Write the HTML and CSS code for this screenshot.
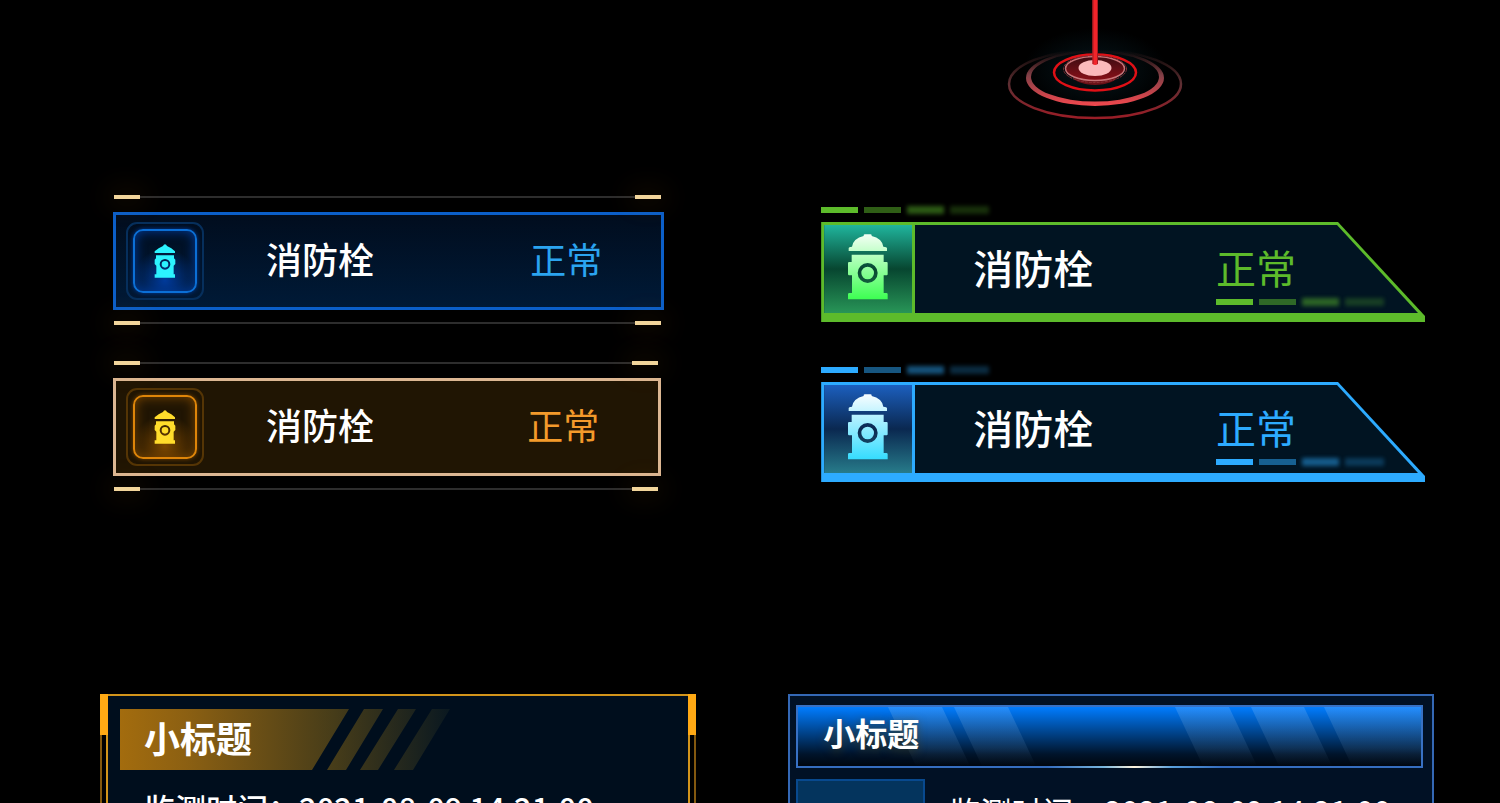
FILE: index.html
```html
<!DOCTYPE html>
<html lang="zh-CN">
<head>
<meta charset="utf-8">
<title>消防栓</title>
<link rel="stylesheet" href="styles.css">
</head>
<body>
<svg class="defs" width="0" height="0" aria-hidden="true">
  <symbol id="hydrant" viewBox="0 0 120 196">
    <path fill-rule="evenodd" d="M2 50V42Q2 38 12 37Q16 12 47 5V3Q47 0 51 0H67Q71 0 71 3V5Q102 12 106 37Q117 38 117 42V50ZM11 61H107V83H116Q119 83 119 87V119Q119 123 116 123H107V176H115Q119 176 119 180V195H0V180Q0 176 4 176H12V123H3Q0 123 0 119V87Q0 83 3 83H11ZM59 86A30 30 0 1 0 59 146A30 30 0 1 0 59 86ZM59 97A19 19 0 1 1 59 135A19 19 0 1 1 59 97Z"/>
  </symbol>
  <symbol id="hydrant-small" viewBox="0 0 64 102">
    <path fill-rule="evenodd" d="M1 27V22L13 13L26 6Q28 1 32 1Q36 1 38 6L51 13L62 22V27ZM5 34H59V43L63 47V60L58 65V91H62V101H1V91H6V65L1 60V47L5 43ZM32 45A16 16 0 1 0 32 77A16 16 0 1 0 32 45ZM32 51A10 10 0 1 1 32 71A10 10 0 1 1 32 51Z"/>
  </symbol>
</svg>
<main class="board">
  <svg class="beacon" width="200" height="140" viewBox="0 0 200 140" fill="none" aria-hidden="true">
    <defs>
      <linearGradient id="ring-outer" x1="0" y1="0" x2="0" y2="1">
        <stop offset="0" stop-color="#633" stop-opacity="0"/>
        <stop offset=".5" stop-color="#5e2f33"/>
        <stop offset="1" stop-color="#9a1e27"/>
      </linearGradient>
      <linearGradient id="ring-mid" x1="0" y1="0" x2="0" y2="1">
        <stop offset="0" stop-color="#733" stop-opacity="0"/>
        <stop offset=".45" stop-color="#824047"/>
        <stop offset="1" stop-color="#f2484e"/>
      </linearGradient>
      <radialGradient id="haze">
        <stop offset="0" stop-color="#0b2c38" stop-opacity=".5"/>
        <stop offset="1" stop-color="#0b2c38" stop-opacity="0"/>
      </radialGradient>
      <linearGradient id="core-glow" x1="0" y1="0" x2="0" y2="1">
        <stop offset="0" stop-color="#3d0c12"/>
        <stop offset="1" stop-color="#8a1018"/>
      </linearGradient>
    </defs>
    <ellipse cx="100" cy="70" rx="72" ry="42" fill="url(#haze)"/>
    <ellipse cx="100" cy="84" rx="86" ry="34" stroke="url(#ring-outer)" stroke-width="2.5"/>
    <path fill="url(#ring-mid)" fill-rule="evenodd" d="M31 78A69 28 0 1 0 169 78A69 28 0 1 0 31 78ZM36 77A64 24.5 0 1 1 164 77A64 24.5 0 1 1 36 77Z"/>
    <ellipse cx="100" cy="72.500" rx="41" ry="18" stroke="#e01016" stroke-width="2.500"/>
    <ellipse cx="100" cy="76" rx="22" ry="9" fill="#b3121a" opacity=".6"/>
    <ellipse cx="100" cy="68.500" rx="29.500" ry="12" fill="url(#core-glow)" stroke="#c87377" stroke-width="1.500"/>
    <ellipse cx="100" cy="69" rx="31.500" ry="13.500" stroke="#8b3036" stroke-width="1" stroke-dasharray="3 1"/>
    <ellipse cx="100" cy="68" rx="16.500" ry="8" fill="#fbb9bb"/>
    <path d="M97.500 0H103V64Q100 66 97.500 64Z" fill="#f2242a"/>
    <path d="M97.500 0H98.500V64H97.500ZM102 0H103V64H102Z" fill="#a81a20"/>
  </svg>

  <section class="framed-tags">
    <article class="framed framed-blue">
      <div class="rail"><i></i><i></i></div>
      <div class="framed-box">
        <div class="badge"><div class="badge-in"><svg width="22" height="34"><use href="#hydrant-small"/></svg></div></div>
        <span class="framed-name">消防栓</span>
        <span class="framed-state">正常</span>
      </div>
      <div class="rail rail-end"><i></i><i></i></div>
    </article>
    <article class="framed framed-gold">
      <div class="rail"><i></i><i></i></div>
      <div class="framed-box">
        <div class="badge"><div class="badge-in"><svg width="22" height="34"><use href="#hydrant-small"/></svg></div></div>
        <span class="framed-name">消防栓</span>
        <span class="framed-state">正常</span>
      </div>
      <div class="rail rail-end"><i></i><i></i></div>
    </article>
  </section>

  <section class="cut-tags">
    <article class="cut cut-green">
      <div class="dashes"><i></i><i></i><i></i><i></i></div>
      <div class="cut-edge">
        <div class="cut-face">
          <div class="cut-icon">
            <svg width="40" height="66"><defs><linearGradient id="fill-green" x1="0" y1="0" x2="0" y2="1"><stop offset="0" stop-color="#f4fff5"/><stop offset="1" stop-color="#3dff52"/></linearGradient></defs><use href="#hydrant" fill="url(#fill-green)"/></svg>
          </div>
          <span class="cut-name">消防栓</span>
          <div class="cut-state"><span>正常</span><div class="dashes"><i></i><i></i><i></i><i></i></div></div>
        </div>
      </div>
    </article>
    <article class="cut cut-blue">
      <div class="dashes"><i></i><i></i><i></i><i></i></div>
      <div class="cut-edge">
        <div class="cut-face">
          <div class="cut-icon">
            <svg width="40" height="66"><defs><linearGradient id="fill-blue" x1="0" y1="0" x2="0" y2="1"><stop offset="0" stop-color="#f8fdff"/><stop offset="1" stop-color="#35dcff"/></linearGradient></defs><use href="#hydrant" fill="url(#fill-blue)"/></svg>
          </div>
          <span class="cut-name">消防栓</span>
          <div class="cut-state"><span>正常</span><div class="dashes"><i></i><i></i><i></i><i></i></div></div>
        </div>
      </div>
    </article>
  </section>

  <section class="gold-panel">
    <div class="gold-inner">
      <header class="gold-head">
        <svg class="gold-stripes" width="330" height="61" viewBox="0 0 330 61" aria-hidden="true">
          <defs><linearGradient id="gold-fade" gradientUnits="userSpaceOnUse" x1="0" y1="0" x2="330" y2="0">
            <stop offset="0" stop-color="#a36c0e"/><stop offset=".2" stop-color="#8c6012"/><stop offset=".65" stop-color="#463c19"/><stop offset="1" stop-color="#0a1820"/>
          </linearGradient></defs>
          <path fill="url(#gold-fade)" d="M0 0H229L192 61H0ZM244 0H263L226 61H207ZM278 0H296L258 61H240ZM312 0H330L293 61H274Z"/>
        </svg>
        <h2>小标题</h2>
      </header>
      <p>监测时间：2021-08-09 14:21:00</p>
    </div>
  </section>

  <section class="blue-panel">
    <header class="blue-head">
      <svg class="beams beams-left" width="150" height="59" viewBox="0 0 150 59" aria-hidden="true">
        <defs><linearGradient id="beam" x1="0" y1="0" x2="0" y2="1"><stop offset="0" stop-color="#fff" stop-opacity=".14"/><stop offset=".7" stop-color="#9fd0ff" stop-opacity=".09"/><stop offset="1" stop-color="#9fd0ff" stop-opacity="0"/></linearGradient></defs>
        <path fill="url(#beam)" d="M0 0H54L82 59H28ZM66 0H120L148 59H94Z"/>
      </svg>
      <svg class="beams beams-right" width="246" height="59" viewBox="0 0 246 59" aria-hidden="true">
        <path fill="url(#beam)" d="M0 0H54L82 59H28ZM76 0H129L157 59H104ZM149 0H246V59H177Z"/>
      </svg>
      <h2>小标题</h2>
    </header>
    <div class="blue-body">
      <div class="thumb"></div>
      <p>监测时间：2021-08-09 14:21:00</p>
    </div>
  </section>
</main>
</body>
</html>
```
FILE: styles.css
```css
* { box-sizing: border-box; }

body {
  margin: 0;
  background: #000;
  color: #fff;
  font-family: "Noto Sans CJK SC", sans-serif;
}

h2, p { margin: 0; }
.defs { position: absolute; }

.board {
  display: grid;
  grid-template-columns: 12fr 13fr;
  grid-template-rows: auto auto 1fr;
  column-gap: 92px;
  height: 100vh;
  padding: 0 66px 0 100px;
  overflow: hidden;
}

.beacon {
  display: block;
  grid-column: 2;
  margin-left: 207px;
}

/* framed tags */
.framed-tags {
  display: flex;
  flex-direction: column;
  gap: 36px;
  grid-column: 1;
  padding: 55px 32px 0 13px;
}

.framed-gold { margin-right: 3px; }

.rail {
  display: flex;
  justify-content: space-between;
  margin: 0 3px 13px 1px;
  background: linear-gradient(#2d2d2d, #2d2d2d) center / 100% 2px no-repeat;
}

.rail-end { margin: 11px 3px 0 1px; }

.rail i {
  width: 26px;
  height: 4px;
  background: #f2d59b;
  box-shadow: 0 0 28px 6px rgba(255, 140, 20, .09);
}

.framed-box {
  display: flex;
  align-items: center;
  height: 98px;
  padding: 0 59px 0 10px;
  border: 3px solid var(--line);
  background: var(--fill);
  font-size: 36px;
  line-height: 52px;
}

.framed-blue {
  --line: #0b5fc9;
  --fill: linear-gradient(#010d1e, #001a37);
  --accent: #0b6fd6;
  --ring: #062f5c;
  --glow: #003b9c;
  --icon: #2cf3ff;
  --state: #2ba4f0;
}

.framed-gold {
  --line: #dcb793;
  --fill: #201503;
  --accent: #de8509;
  --ring: #553505;
  --glow: #7a4600;
  --icon: #ffdc2b;
  --state: #f39a2b;
}

.badge {
  display: grid;
  place-items: center;
  width: 78px;
  height: 78px;
  border: 2px solid var(--ring);
  border-radius: 11px;
}

.badge-in {
  display: grid;
  place-items: center;
  width: 64px;
  height: 64px;
  border: 2px solid var(--accent);
  border-radius: 10px;
  background: radial-gradient(circle at 50% 82%, var(--glow), transparent 55%);
  box-shadow: inset 0 0 12px var(--glow), 0 0 4px var(--glow);
}

.badge svg { fill: var(--icon); }
.framed-name, .framed-state { padding-bottom: 6px; }
.framed-name { margin-left: 62px; font-weight: 500; }
.framed-state { margin-left: auto; color: var(--state); }

/* cut-corner tags */
.cut-tags {
  display: flex;
  flex-direction: column;
  gap: 45px;
  grid-column: 2;
  padding: 67px 9px 0 33px;
}

.cut-green { --main: #5dbb2b; --icon-bg: linear-gradient(#20b59d, #074630 50%, #289557); }
.cut-blue { --main: #2dabff; --icon-bg: linear-gradient(#1c5fbe, #0a2850 50%, #277b8a); }

.dashes { display: flex; gap: 6px; }
.dashes i { width: 37px; height: 6px; background: var(--main); }
.dashes i:nth-child(2) { opacity: .5; }
.dashes i:nth-child(3) { height: 8px; margin: -1px 0; opacity: .48; filter: blur(2px); }
.dashes i:nth-child(4) { width: 39px; height: 8px; margin: -1px 0; opacity: .25; filter: blur(2px); }

.cut-edge {
  margin-top: 9px;
  padding: 3px 0 9px 3px;
  background: var(--main);
  clip-path: polygon(0 0, calc(100% - 87px) 0, 100% 94px, 100% 100%, 0 100%);
}

.cut-face {
  display: flex;
  height: 88px;
  padding-right: 41px;
  background: #011422;
  clip-path: polygon(0 0, calc(100% - 88px) 0, calc(100% - 7px) 100%, 0 100%);
  font-size: 40px;
  line-height: 58px;
}

.cut-icon {
  display: grid;
  place-items: center;
  width: 91px;
  padding-bottom: 4px;
  border-right: 3px solid var(--main);
  background: var(--icon-bg);
}

.cut-name { margin-left: 58px; padding-top: 13px; font-weight: 500; }
.cut-state { margin-left: auto; padding-top: 13px; color: var(--main); }
.cut-state span { display: block; }
.cut-state .dashes { margin-top: 3px; }

/* gold panel */
.gold-panel {
  position: relative;
  grid-column: 1;
  margin-top: 203px;
  padding: 0 4px;
  border: solid #83580f;
  border-width: 0 2px;
}

.gold-panel::before,
.gold-panel::after {
  content: "";
  position: absolute;
  top: 0;
  width: 8px;
  height: 41px;
  background: #ffa914;
}

.gold-panel::before { left: -2px; }
.gold-panel::after { right: -2px; }

.gold-inner {
  height: 100%;
  padding: 13px 12px;
  border: solid #d2941b;
  border-width: 2px 2px 0;
  background: #000e1d;
}

.gold-head {
  position: relative;
  padding: 0 24px 5px;
}

.gold-stripes { position: absolute; left: 0; top: 0; }

.gold-head h2 {
  position: relative;
  font-size: 36px;
  line-height: 56px;
}

.gold-inner p {
  margin: 14px 0 0 24px;
  font-size: 31px;
  font-weight: 500;
  line-height: 48px;
  white-space: nowrap;
}

/* blue panel */
.blue-panel {
  grid-column: 2;
  margin-top: 203px;
  padding: 9px 9px 0 6px;
  border: solid #3468b5;
  border-width: 2px 2px 0;
  background: #011125;
}

.blue-head {
  position: relative;
  padding: 0 25px 8px;
  border: 2px solid #3871c4;
  background: linear-gradient(#007cff, #00142b 80%, #00060f);
}

.blue-head::after {
  content: "";
  position: absolute;
  left: 0;
  right: 0;
  top: 100%;
  height: 2px;
  background: linear-gradient(90deg, #356dbf 40%, #78b5dd 49%, #fff4de 54%, #59a0dc 60%, #356dbf 68%);
}

.blue-head h2 {
  position: relative;
  font-size: 32px;
  line-height: 51px;
  text-shadow: 0 2px 8px rgba(80, 60, 0, .6);
}

.beams { position: absolute; top: 0; }
.beams-left { left: 90px; }
.beams-right { right: 0; }

.blue-body {
  display: flex;
  align-items: flex-start;
  gap: 24px;
  margin-top: 11px;
}

.thumb {
  width: 129px;
  height: 129px;
  border: 2px solid #08498e;
  background: #04345d;
}

.blue-body p {
  margin-top: 9px;
  font-size: 31px;
  line-height: 46px;
  white-space: nowrap;
}
```
